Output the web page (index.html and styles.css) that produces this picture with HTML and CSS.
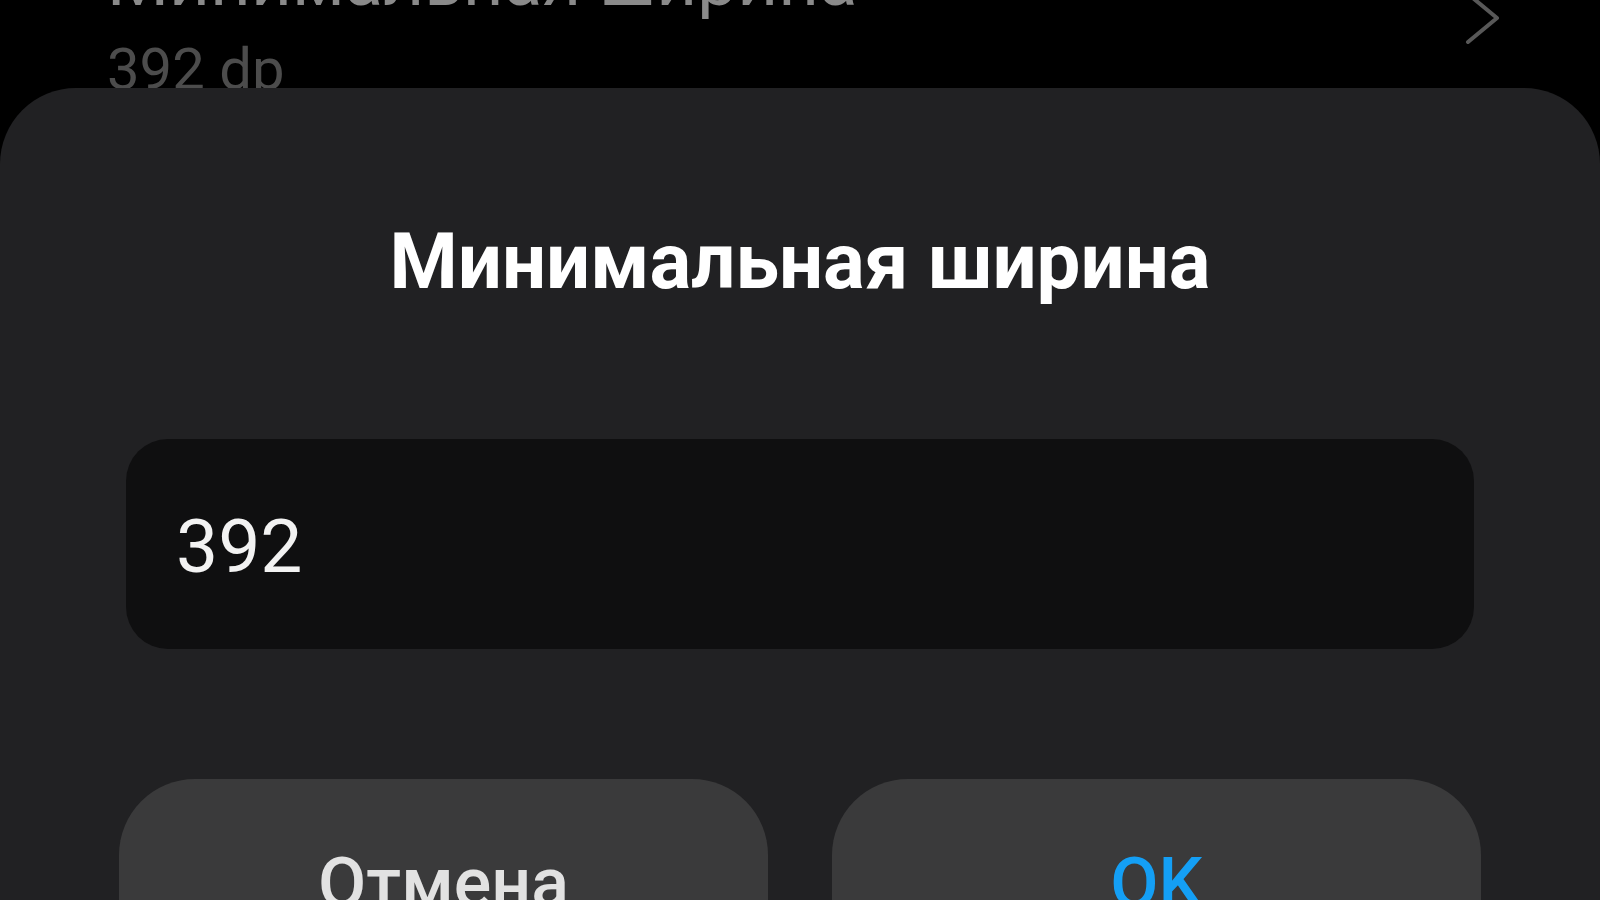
FILE: index.html
```html
<!DOCTYPE html>
<html lang="ru">
<head>
<meta charset="utf-8">
<title>Минимальная ширина</title>
<link rel="stylesheet" href="styles.css">
</head>
<body>
<div class="screen">
  <div class="bg-list">
    <div class="list-item">
      <div class="item-text">
        <div class="item-title">Минимальная ширина</div>
        <div class="item-sub">392 dp</div>
      </div>
      <svg class="chevron" width="36" height="56" viewBox="0 0 36 56"><polyline points="3,4 32,28 3,52" fill="none" stroke="#585858" stroke-width="4" stroke-linecap="round" stroke-linejoin="round"/></svg>
    </div>
  </div>
  <div class="dialog">
    <div class="dialog-title">Минимальная ширина</div>
    <div class="field"><span class="field-value">392</span></div>
    <div class="buttons">
      <div class="btn btn-cancel">Отмена</div>
      <div class="btn btn-ok">OK</div>
    </div>
  </div>
</div>
</body>
</html>
```
FILE: styles.css
```css
html, body {
  margin: 0;
  padding: 0;
  background: #000;
  overflow: hidden;
}
body {
  font-family: Roboto, "Noto Sans", sans-serif;
  color: #fff;
}
.screen {
  width: 1600px;
  height: 900px;
  display: flex;
  flex-direction: column;
  overflow: hidden;
}
.bg-list {
  height: 88px;
  flex: 0 0 88px;
  overflow: hidden;
}
.list-item {
  margin-top: -55px;
  padding: 0 99px 0 107px;
  display: flex;
  justify-content: space-between;
  align-items: flex-start;
}
.item-title {
  font-size: 71px;
  line-height: 1;
  color: #8a8a8a;
}
.item-sub {
  margin-top: 24px;
  font-size: 58px;
  line-height: 1;
  color: #4c4c4c;
}
.chevron {
  margin-top: 45px;
  display: block;
}
.dialog {
  flex: 1;
  background: #212123;
  border-radius: 76px 76px 0 0;
  padding: 135px 119px 0;
  display: flex;
  flex-direction: column;
}
.dialog-title {
  font-size: 78px;
  font-weight: 700;
  line-height: 1;
  text-align: center;
  color: #fff;
}
.field {
  margin: 138px 7px 0;
  height: 210px;
  box-sizing: border-box;
  background: #0f0f10;
  border-radius: 42px;
  padding: 70px 0 0 50px;
}
.field-value {
  font-size: 75px;
  line-height: 1;
  color: #f2f2f2;
  display: block;
}
.buttons {
  margin-top: 130px;
  display: flex;
  gap: 64px;
}
.btn {
  flex: 1;
  height: 200px;
  box-sizing: border-box;
  background: #3a3a3b;
  border-radius: 76px;
  padding-top: 69px;
  text-align: center;
  font-size: 70px;
  font-weight: 500;
  line-height: 1;
}
.btn-cancel {
  color: #e2e2e2;
}
.btn-ok {
  color: #149ff5;
}
```
